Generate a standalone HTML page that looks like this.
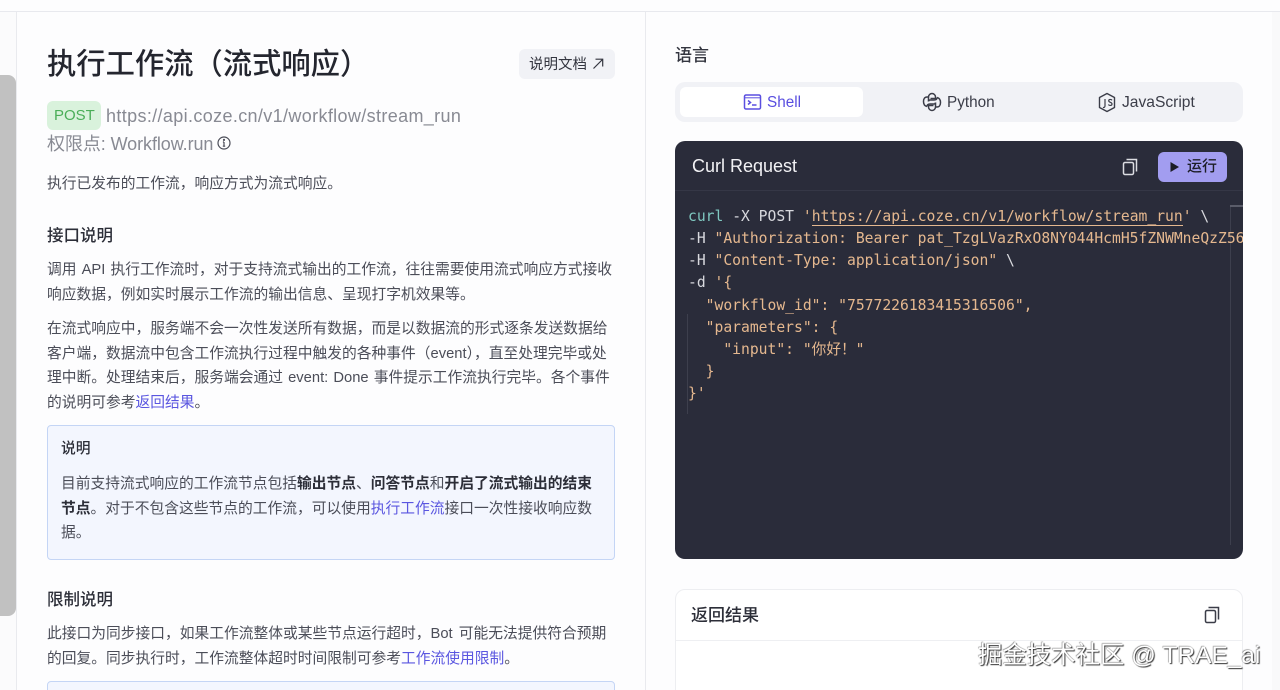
<!DOCTYPE html>
<html lang="zh"><head><meta charset="utf-8"><style>
html,body{margin:0;padding:0;width:1280px;height:690px;overflow:hidden;background:#fdfdfe}
body{position:relative;font-family:"Liberation Sans","Noto Sans CJK SC",sans-serif;color:#4b4d58}
.a{position:absolute}
.t{position:absolute;white-space:nowrap;line-height:24px;height:24px}
.p{font-size:14.75px;left:47px;color:#4b4d58}
.h{font-size:16.5px;font-weight:500;left:47px;color:#2c2e38}
.c{position:absolute;left:13px;white-space:pre;font:14.68px/22px "DejaVu Sans Mono","Noto Sans CJK SC",monospace;color:#e5b88f;height:22px}
a{color:#5a56e0;text-decoration:none}
b{font-weight:700;color:#2c2e38}
</style></head><body>
<div class="a" style="left:0;top:0;width:1280px;height:11px;background:#fdfdfe;border-bottom:1px solid #e8e9ee"></div>
<div class="a" style="left:0;top:12px;width:16px;height:678px;background:#fbfbfc"></div>
<div class="a" style="left:16px;top:12px;width:1px;height:678px;background:#e9eaee"></div>
<div class="a" style="left:0;top:75px;width:16px;height:541px;background:#c1c1c1;border-radius:0 8px 8px 0"></div>
<div class="a" style="left:645px;top:12px;width:1px;height:678px;background:#e9eaee"></div>
<div class="a" style="left:1272px;top:12px;width:8px;height:678px;background:#f9f9fa"></div>

<div class="t" style="left:47px;top:45px;height:40px;line-height:40px;font-size:29.3px;font-weight:500;color:#24262f">执行工作流（流式响应）</div>
<div class="a" style="left:519px;top:49px;width:96px;height:30px;border-radius:6px;background:#f1f2f6"></div>
<div class="t" style="left:529px;top:53px;font-size:14.5px;color:#33353f">说明文档</div>
<svg class="a" style="left:592px;top:57px" width="12" height="13" viewBox="0 0 12 13" fill="none" stroke="#33353f" stroke-width="1.2"><path d="M1.500 11.500 10.500 2.500M3.500 2.200H10.700V9.500"/></svg>

<div class="a" style="left:47px;top:101px;width:54px;height:29px;border-radius:6px;background:#d9f2dc"></div>
<div class="t" style="left:54px;top:104px;font-size:15px;color:#4aae58">POST</div>
<div class="t" style="left:106px;top:104px;font-size:18px;letter-spacing:.36px;color:#888a93">https://api.coze.cn/v1/workflow/stream_run</div>
<div class="t" style="left:47px;top:132px;font-size:18px;letter-spacing:-.08px;color:#888a93">权限点: Workflow.run</div>
<svg class="a" style="left:217px;top:136px" width="14" height="14" viewBox="0 0 14 14" fill="none" stroke="#4b4d58" stroke-width="1.2"><circle cx="7" cy="7" r="6"/><path d="M7 6v4.200M5.800 10.200h2.400M5.900 6H7"/><circle cx="7" cy="3.900" r=".5"/></svg>

<div class="t p" style="top:172px">执行已发布的工作流，响应方式为流式响应。</div>
<div class="t h" style="top:224px">接口说明</div>
<div class="t p" style="top:258px;word-spacing:1px">调用 API 执行工作流时，对于支持流式输出的工作流，往往需要使用流式响应方式接收</div>
<div class="t p" style="top:283px">响应数据，例如实时展示工作流的输出信息、呈现打字机效果等。</div>
<div class="t p" style="top:317px">在流式响应中，服务端不会一次性发送所有数据，而是以数据流的形式逐条发送数据给</div>
<div class="t p" style="top:342px">客户端，数据流中包含工作流执行过程中触发的各种事件（event），直至处理完毕或处</div>
<div class="t p" style="top:366px;word-spacing:1px">理中断。处理结束后，服务端会通过 event: Done 事件提示工作流执行完毕。各个事件</div>
<div class="t p" style="top:391px">的说明可参考<a>返回结果</a>。</div>

<div class="a" style="left:47px;top:425px;width:566px;height:133px;background:#f3f6fe;border:1px solid #c4d5f5;border-radius:4px"></div>
<div class="t" style="left:61px;top:437px;font-size:14.8px;font-weight:500;color:#2c2e38">说明</div>
<div class="t p" style="left:61px;top:472px">目前支持流式响应的工作流节点包括<b>输出节点</b>、<b>问答节点</b>和<b>开启了流式输出的结束</b></div>
<div class="t p" style="left:61px;top:497px"><b>节点</b>。对于不包含这些节点的工作流，可以使用<a>执行工作流</a>接口一次性接收响应数</div>
<div class="t p" style="left:61px;top:521px">据。</div>

<div class="t h" style="top:588px">限制说明</div>
<div class="t p" style="top:622px;word-spacing:2px">此接口为同步接口，如果工作流整体或某些节点运行超时，Bot 可能无法提供符合预期</div>
<div class="t p" style="top:647px">的回复。同步执行时，工作流整体超时时间限制可参考<a>工作流使用限制</a>。</div>
<div class="a" style="left:47px;top:681px;width:566px;height:20px;background:#f3f6fe;border:1px solid #c4d5f5;border-radius:4px"></div>

<div class="t" style="left:675px;top:44px;font-size:17px;font-weight:500;color:#33353f">语言</div>
<div class="a" style="left:675px;top:82px;width:568px;height:40px;border-radius:10px;background:#f1f2f6"></div>
<div class="a" style="left:680px;top:87px;width:183px;height:30px;border-radius:6px;background:#fff"></div>
<svg class="a" style="left:743px;top:93px" width="19" height="18" viewBox="0 0 19 18" fill="none" stroke="#5a4fe0" stroke-width="1.5"><rect x="1.500" y="2" width="16" height="14" rx="1.500"/><path d="M1.500 4.800h16" stroke-width="1"/><path d="M5 7.500l2.500 2-2.500 2M9 12h4.500"/></svg>
<div class="t" style="left:767px;top:91px;font-size:15.3px;color:#5a4fe0">Shell</div>
<svg class="a" style="left:922px;top:92px" width="20" height="20" viewBox="0 0 20 20" fill="none" stroke="#3b3d48" stroke-width="1.5" stroke-linejoin="round"><path d="M6.500 9.500V5c0-2 1.700-3.500 3.500-3.500S13.500 3 13.500 5v1.500H8.500"/><path d="M6.500 9.500c0-1 .8-1.500 1.500-1.500h4c1.500 0 3-.5 3-2.500M13.500 10.500V15c0 2-1.700 3.500-3.500 3.500S6.500 17 6.500 15v-1.500h5"/><path d="M13.500 10.500c0 1-.8 1.500-1.500 1.500H8c-1.500 0-3 .5-3 2.500M6.500 5H5C2.800 5 1.500 6.700 1.500 9.500c0 2.500 1.300 4.500 3.500 5M13.500 15H15c2.200 0 3.500-1.700 3.500-4.500 0-2.500-1.300-4.500-3.500-5"/></svg>
<div class="t" style="left:947px;top:91px;font-size:15.3px;color:#3b3d48">Python</div>
<svg class="a" style="left:1097px;top:92px" width="20" height="21" viewBox="0 0 20 21" fill="none" stroke="#3b3d48" stroke-width="1.4"><path d="M10 1.500l7.500 4v10l-7.500 4-7.500-4v-10z" stroke-linejoin="round"/><path d="M8 7v7c0 1.200-1 1.800-2 1.300M15 8.300c-.6-1.100-3.300-1.300-3.300.5 0 1.900 3.300 1.200 3.300 3.200 0 1.900-2.900 1.800-3.600.5" stroke-width="1.200"/></svg>
<div class="t" style="left:1122px;top:91px;font-size:15.6px;color:#3b3d48">JavaScript</div>

<div class="a" style="left:675px;top:141px;width:568px;height:418px;border-radius:10px;background:#2a2c3a;overflow:hidden">
  <div class="a" style="left:0;top:49px;width:568px;height:1px;background:#353746"></div>
  <div class="a" style="left:555px;top:64px;width:1px;height:340px;background:#3d3f4d"></div>
  <div class="a" style="left:555px;top:64px;width:13px;height:2px;background:#5a5c69"></div>
  <div class="a" style="left:12px;top:173px;width:1px;height:100px;background:#3d3f4d"></div>
</div>
<div class="t" style="left:692px;top:154px;font-size:18px;color:#f2f2f5">Curl Request</div>
<svg class="a" style="left:1121px;top:158px" width="18" height="18" viewBox="0 0 18 18" fill="none" stroke="#dcdde2" stroke-width="1.500"><rect x="2.500" y="4.500" width="10" height="12" rx="1.500"/><path d="M5.500 1.500h10v12"/></svg>
<div class="a" style="left:1158px;top:152px;width:69px;height:30px;border-radius:6px;background:#a29df0"></div>
<svg class="a" style="left:1169px;top:160px" width="12" height="14" viewBox="0 0 12 14"><path d="M1.500 2l8.500 5-8.500 5z" fill="#1c1d26"/></svg>
<div class="t" style="left:1187px;top:155px;font-size:15px;font-weight:500;color:#1c1d26">运行</div>

<div class="a" style="left:675px;top:202px;width:568px;height:210px;overflow:hidden">
<div class="c" style="top:4px"><span style="color:#7fc8c0">curl</span> <span style="color:#d8d9de">-X POST</span> <span style="color:#e5b88f">'</span><span style="border-bottom:1.500px solid #e5b88f">https://api.coze.cn/v1/workflow/stream_run</span>' <span style="color:#d8d9de">\</span></div>
<div class="c" style="top:26px"><span style="color:#d8d9de">-H</span> "Authorization: Bearer pat_TzgLVazRxO8NY044HcmH5fZNWMneQzZ56abc</div>
<div class="c" style="top:48px"><span style="color:#d8d9de">-H</span> "Content-Type: application/json" <span style="color:#d8d9de">\</span></div>
<div class="c" style="top:70px"><span style="color:#d8d9de">-d</span> '{</div>
<div class="c" style="top:93px">  "workflow_id": "7577226183415316506",</div>
<div class="c" style="top:115px">  "parameters": {</div>
<div class="c" style="top:137px">    "input": "你好！"</div>
<div class="c" style="top:159px">  }</div>
<div class="c" style="top:181px">}'</div>
</div>

<div class="a" style="left:675px;top:589px;width:568px;height:120px;border-radius:10px;background:#fff;border:1px solid #edeef1;box-sizing:border-box"></div>
<div class="a" style="left:676px;top:640px;width:566px;height:1px;background:#eeeff2"></div>
<div class="t" style="left:691px;top:604px;font-size:17px;font-weight:500;color:#2c2e38">返回结果</div>
<svg class="a" style="left:1203px;top:606px" width="18" height="18" viewBox="0 0 18 18" fill="none" stroke="#3b3d48" stroke-width="1.500"><rect x="2.500" y="4.500" width="10" height="12" rx="1.500"/><path d="M5.500 1.500h10v12"/></svg>

<div class="t" style="left:978px;top:641px;height:30px;line-height:30px;font-size:24.400px;color:#fff;text-shadow:1px 1px 1px #333,-.5px -.5px 1px #777">掘金技术社区 @ TRAE_ai</div>
</body></html>
